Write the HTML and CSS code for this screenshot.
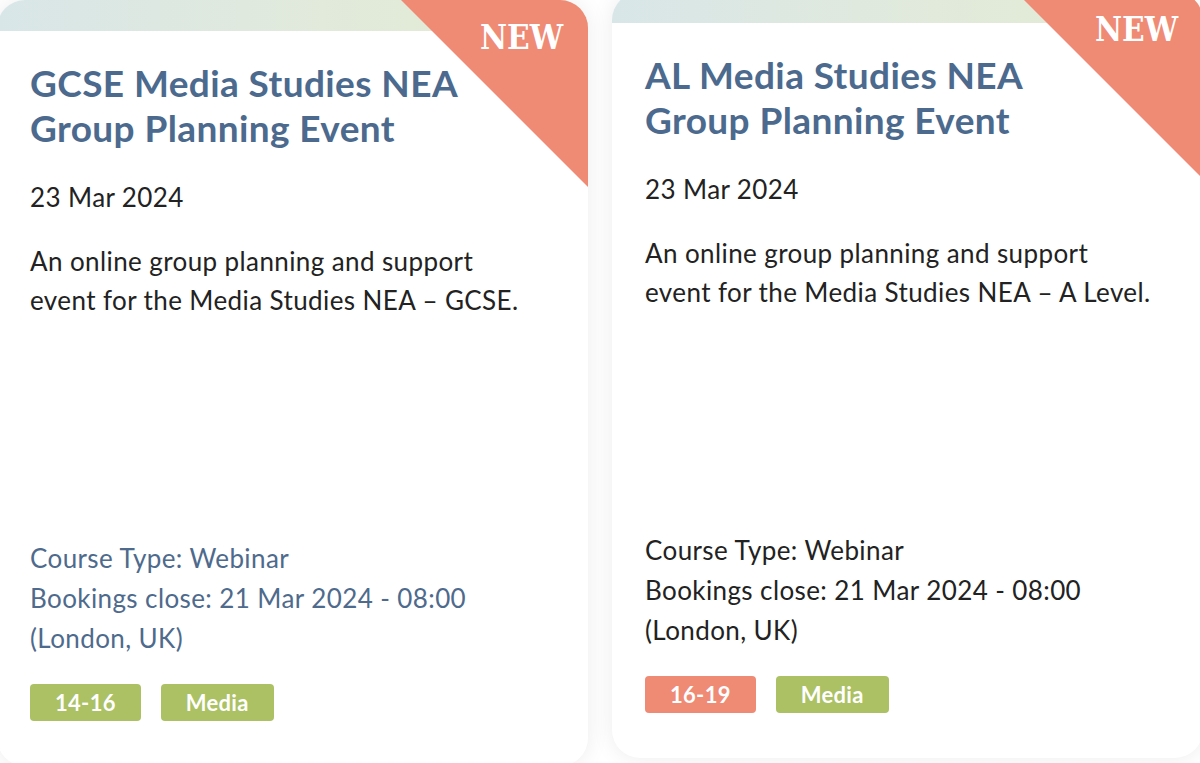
FILE: index.html
```html
<!DOCTYPE html>
<html lang="en">
<head>
<meta charset="utf-8">
<title>Courses</title>
<link rel="stylesheet" href="styles.css">
</head>
<body>
<div class="cards">
  <article class="card card-left">
    <div class="card-bar"></div>
    <div class="corner"><span class="corner-label">NEW</span></div>
    <div class="card-body">
      <h2 class="card-title">GCSE Media Studies NEA Group Planning Event</h2>
      <p class="card-date">23 Mar 2024</p>
      <p class="card-desc">An online group planning and support<br>event for the Media Studies NEA – GCSE.</p>
      <div class="card-info info-blue">
        <p>Course Type: Webinar</p>
        <p>Bookings close: 21 Mar 2024 - 08:00 (London, UK)</p>
      </div>
      <div class="tags">
        <span class="tag tag-green">14-16</span>
        <span class="tag tag-green">Media</span>
      </div>
    </div>
  </article>
  <article class="card card-right">
    <div class="card-bar"></div>
    <div class="corner"><span class="corner-label">NEW</span></div>
    <div class="card-body">
      <h2 class="card-title">AL Media Studies NEA Group Planning Event</h2>
      <p class="card-date">23 Mar 2024</p>
      <p class="card-desc">An online group planning and support<br>event for the Media Studies NEA – A Level.</p>
      <div class="card-info info-dark">
        <p>Course Type: Webinar</p>
        <p>Bookings close: 21 Mar 2024 - 08:00 (London, UK)</p>
      </div>
      <div class="tags">
        <span class="tag tag-red">16-19</span>
        <span class="tag tag-green">Media</span>
      </div>
    </div>
  </article>
</div>
</body>
</html>
```

FILE: styles.css
```css
* { box-sizing: border-box; }

html, body {
  margin: 0;
  padding: 0;
  background: #ffffff;
  overflow: hidden;
  width: 1200px;
  height: 763px;
}

body {
  font-family: Lato, "Open Sans", sans-serif;
  color: #222222;
}

.cards {
  display: flex;
  align-items: flex-start;
  gap: 24px;
  margin-left: -3px;
}

.card {
  position: relative;
  flex: 0 0 591px;
  height: 766px;
  background: #ffffff;
  border-radius: 28px;
  overflow: hidden;
  box-shadow: 0 0 22px rgba(0, 0, 0, 0.08);
  display: flex;
  flex-direction: column;
}

.card-right {
  margin-top: -8px;
}

.card-bar {
  height: 31px;
  flex: 0 0 31px;
  background: linear-gradient(90deg, #d9e6e8 0%, #e1eadb 55%, #e4ecd2 100%);
}

.corner {
  position: absolute;
  top: 0;
  right: 0;
  width: 187px;
  height: 187px;
  background: #ef8a75;
  clip-path: polygon(0 0, 100% 0, 100% 100%);
}

.corner-label {
  position: absolute;
  top: 18px;
  right: 25px;
  color: #ffffff;
  font-family: "DejaVu Serif", "Liberation Serif", serif;
  font-stretch: condensed;
  font-weight: 700;
  font-size: 33px;
  line-height: 40px;
}

.card-body {
  flex: 1;
  display: flex;
  flex-direction: column;
  padding: 29px 33px 45px 33px;
}

.card-title {
  margin: 0;
  padding-right: 60px;
  color: #4b6a8e;
  font-weight: 700;
  font-size: 37px;
  letter-spacing: 0.4px;
  line-height: 45px;
}

.card-date {
  margin: 29px 0 0 0;
  font-size: 26px;
  letter-spacing: 0.4px;
  line-height: 36px;
}

.card-desc {
  margin: 27px 0 0 0;
  font-size: 26px;
  letter-spacing: 0.4px;
  line-height: 39px;
}

.card-info {
  margin-top: auto;
  padding-right: 40px;
  font-size: 26px;
  letter-spacing: 0.4px;
  line-height: 40px;
}

.card-info p {
  margin: 0;
}

.info-blue { color: #4e6a8c; }
.info-dark { color: #222222; }

.tags {
  display: flex;
  gap: 20px;
  margin-top: 26px;
}

.tag {
  display: inline-block;
  height: 37px;
  line-height: 37px;
  padding: 0 25px;
  border-radius: 4px;
  color: #ffffff;
  font-weight: 700;
  font-size: 22px;
  letter-spacing: 0.3px;
}

.tag-green { background: #abc164; }
.tag-red { background: #ef8a75; }
```
